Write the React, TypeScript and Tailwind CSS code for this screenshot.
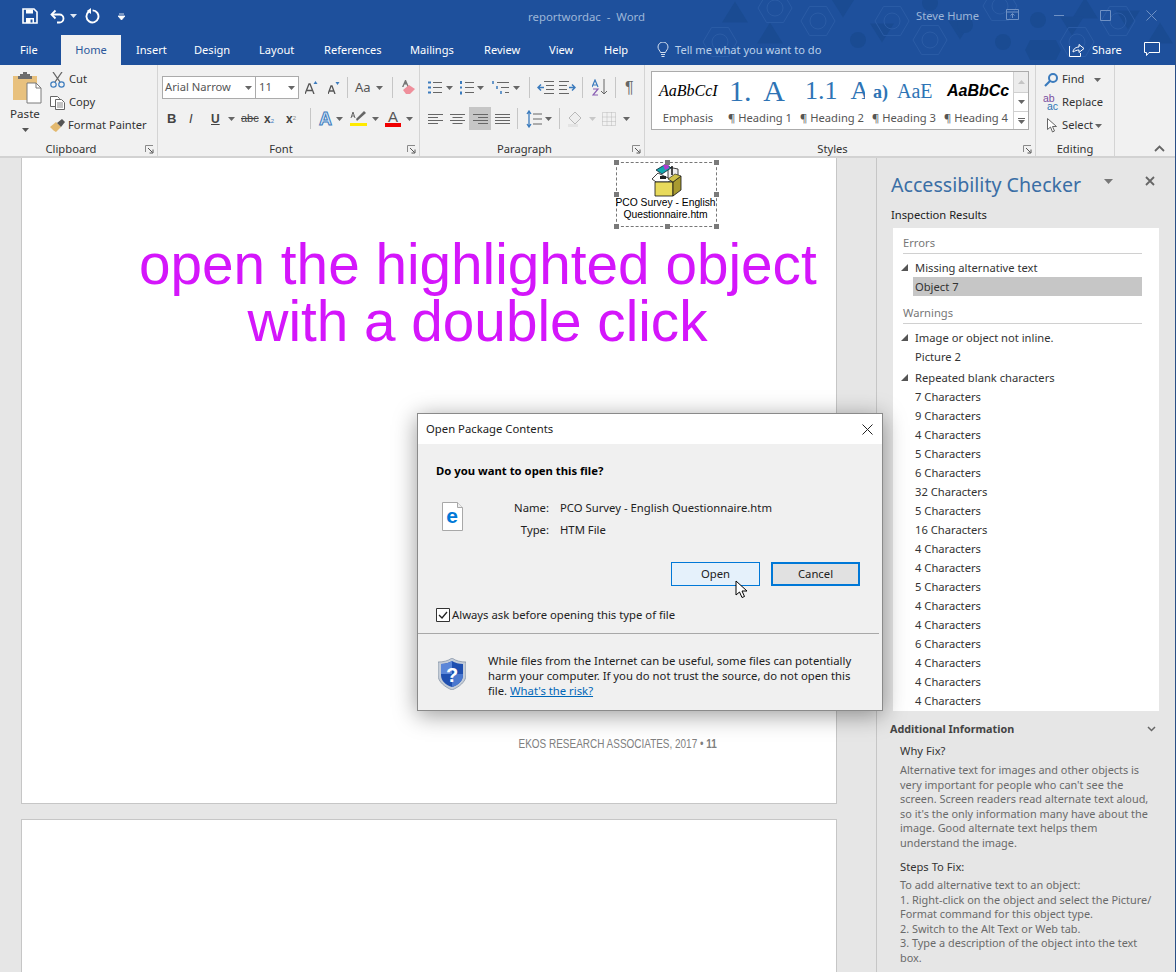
import React from "react";

const Caret = ({ c = "#555", className = "" }: { c?: string; className?: string }) => (
  <svg width="7" height="4" viewBox="0 0 7 4" className={"shrink-0 " + className}>
    <path d="M0 0h7L3.5 4z" fill={c} />
  </svg>
);

const Launcher = () => (
  <svg width="9" height="9" viewBox="0 0 9 9" className="shrink-0">
    <path d="M.5 7V.5H8" fill="none" stroke="#8a8a8a" />
    <path d="M3 3l4.500 4.500M8 4.500V8H4.500" fill="none" stroke="#555" />
  </svg>
);

const Sep = ({ className = "" }: { className?: string }) => <div className={"w-px bg-[#c6c6c6] shrink-0 " + className} />;

const Group = ({
  label,
  className,
  launcher,
  children,
}: {
  label: string;
  className: string;
  launcher?: boolean;
  children: React.ReactNode;
}) => (
  <div className={"flex flex-col h-full border-r border-[#d4d4d4] shrink-0 " + className}>
    <div className="flex-1 min-h-0">{children}</div>
    <div className={"h-[14px] relative text-center text-[11.2px] leading-[14px] text-[#333] " + (launcher ? "pr-[15px]" : "")}>
      {label}
      {launcher && (
        <span className="absolute right-[3px] top-[3px] flex">
          <Launcher />
        </span>
      )}
    </div>
  </div>
);

const dark = "#1a4b92";
const ring = "#2b5ca6";
const triUp = (x: number, y: number, s = 13) => `M${x - s} ${y + s * 0.8}L${x} ${y - s * 0.8}L${x + s} ${y + s * 0.8}z`;
const triDown = (x: number, y: number, s = 13) => `M${x - s} ${y - s * 0.8}L${x + s} ${y - s * 0.8}L${x} ${y + s * 0.8}z`;
const hex = (x: number, y: number, s = 15) =>
  `M${x - s} ${y}L${x - s / 2} ${y - s * 0.85}H${x + s / 2}L${x + s} ${y}L${x + s / 2} ${y + s * 0.85}H${x - s / 2}z`;

const Hexes = () => (
  <svg width="476" height="65" viewBox="700 0 476 65" className="absolute right-0 top-0">
    {[735, 770].map((x, i) => (
      <path key={x} d={triUp(x, i === 0 ? 12 : 33)} fill={dark} />
    ))}
    <path d={triUp(1160, 33)} fill={dark} />
    <path d={triUp(1085, 8)} fill={dark} />
    {[
      [843, 8],
      [882, 33],
      [1072, 26],
      [1128, 20],
      [960, 30],
    ].map(([x, y]) => (
      <path key={x} d={triDown(x, y, 12)} fill={dark} />
    ))}
    {[
      [858, 40],
      [1038, 20],
      [1003, 42],
      [930, 3],
      [965, 25],
    ].map(([x, y]) => (
      <circle key={x} cx={x} cy={y} r="8" fill={dark} />
    ))}
    <path d="M1030 40h26l5 10-5 10h-26l-5-10z" fill={dark} />
    {[
      [818, 21],
      [892, 21],
      [930, 40],
      [1000, 6],
      [1077, 42],
      [1118, 21],
      [775, 8],
      [720, 42],
    ].map(([x, y]) => (
      <g key={x} fill="none" stroke={ring}>
        <path d={hex(x, y, 17)} />
        <circle cx={x} cy={y} r="8" />
      </g>
    ))}
  </svg>
);

const TitleBar = () => (
  <div className="h-[32px] flex items-center relative text-white">
    <svg width="16" height="16" viewBox="0 0 16 16" className="ml-[22px]">
      <path d="M1 1h11l3 3v11H1z" fill="none" stroke="#fff" strokeWidth="1.600" />
      <path d="M4 1.500h7v4H4zM4 10h8v5H4z" fill="#fff" />
      <path d="M8.500 11.500h2v3h-2z" fill="#1e509c" />
    </svg>
    <svg width="16" height="15" viewBox="0 0 16 15" className="ml-[12px]">
      <path d="M5.500 1.500L1.500 5.500l4 4" fill="none" stroke="#fff" strokeWidth="1.800" />
      <path d="M2 5.500h7.500a4 4 0 0 1 0 8H7" fill="none" stroke="#fff" strokeWidth="1.800" />
    </svg>
    <Caret c="#dfe7f3" className="ml-[4px]" />
    <svg width="16" height="16" viewBox="0 0 16 16" className="ml-[7px]">
      <path d="M8.600 2.400a6 6 0 1 1-4 1.400" fill="none" stroke="#fff" strokeWidth="1.900" />
      <path d="M7 0v6L2.800 3z" fill="#fff" />
    </svg>
    <svg width="7" height="7" viewBox="0 0 7 7" className="ml-[18px]">
      <path d="M1 1h5M0 3h7L3.500 7z" stroke="#fff" fill="#fff" strokeWidth=".8" />
    </svg>
    <div className="absolute left-[528px] top-[8px] whitespace-nowrap text-[11.4px] leading-[17px] text-[#9db6d8]">
      reportwordac&nbsp; -&nbsp; Word
    </div>
    <div className="absolute left-[916px] top-[7px] text-[11.2px] leading-[17px] text-[#9db6d8]">Steve Hume</div>
    <div className="absolute left-[1006px] top-[9px] flex items-center">
      <svg width="13" height="12" viewBox="0 0 13 12">
        <path d="M.5 .5h12v10H.5zM.5 3h12M6.500 9V5M4.500 6.500l2-2 2 2" fill="none" stroke="#6f91c4" />
      </svg>
      <svg width="10" height="1" className="ml-[35px]">
        <path d="M0 .5h10" stroke="#6f91c4" />
      </svg>
      <svg width="11" height="11" viewBox="0 0 11 11" className="ml-[36px]">
        <path d="M.5 .5h10v10H.5z" fill="none" stroke="#6f91c4" />
      </svg>
      <svg width="11" height="11" viewBox="0 0 11 11" className="ml-[35px]">
        <path d="M.5 .5l10 10M10.500 .5l-10 10" fill="none" stroke="#6f91c4" />
      </svg>
    </div>
  </div>
);

const tabs: [string, string][] = [
  ["Insert", "w-[58px]"],
  ["Design", "w-[65px]"],
  ["Layout", "w-[65px]"],
  ["References", "w-[86px]"],
  ["Mailings", "w-[74px]"],
  ["Review", "w-[65px]"],
  ["View", "w-[55px]"],
  ["Help", "w-[53px]"],
];

const TabBar = () => (
  <div className="h-[33px] flex relative text-[11.1px] text-white leading-[35px]">
    <div className="w-[61px] pl-[20px]">File</div>
    <div className="w-[60px] h-[30px] mt-[3px] bg-[#f1f1f1] text-[#2b579a] text-center leading-[29px]">Home</div>
    {tabs.map(([t, w]) => (
      <div key={t} className={"pl-[15px] whitespace-nowrap " + w}>
        {t}
      </div>
    ))}
    <div className="flex items-center ml-[15px] mt-[1px]">
      <svg width="12" height="15" viewBox="0 0 12 15">
        <path
          d="M3.500 10.500C3 8.500 1 7.500 1 5a5 5 0 0 1 10 0c0 2.500-2 3.500-2.500 5.500zM4 12.500h4M4.500 14.500h3"
          fill="none"
          stroke="#d5e0f0"
        />
      </svg>
      <span className="ml-[6px] text-[#bcd0ea] whitespace-nowrap leading-[17px]">Tell me what you want to do</span>
    </div>
    <div className="absolute left-[1069px] top-[1px] flex items-center h-[33px]">
      <svg width="16" height="14" viewBox="0 0 16 14">
        <path d="M.5 3v10.500h11V10" fill="none" stroke="#fff" />
        <path d="M4 9c0-3 3-5 6-5V1.500l5 4-5 4V7c-2.500 0-4 1-6 2z" fill="none" stroke="#fff" />
      </svg>
      <span className="ml-[7px] leading-[17px]">Share</span>
      <svg width="16" height="15" viewBox="0 0 16 15" className="ml-[22px]">
        <path d="M.5 .5h15v10H5l-2.500 3v-3h-2z" fill="none" stroke="#fff" />
      </svg>
    </div>
  </div>
);

const PasteIcon = () => (
  <svg width="30" height="32" viewBox="0 0 30 32" className="ml-[12px] block">
    <path d="M1 4h24v24H1z" fill="#e8c17e" />
    <path d="M8 4V2h3V0h4v2h3v2h2v3H6V4z" fill="#6d6d6d" />
    <path d="M15 11h9l5 5v15H15z" fill="#fff" stroke="#7a7a7a" />
    <path d="M24 11v5h5" fill="none" stroke="#7a7a7a" />
  </svg>
);

const Clipboard = () => (
  <div className="flex pt-[7px]">
    <div className="w-[50px] text-center text-[11.6px] text-[#333] leading-[16px]">
      <PasteIcon />
      <div className="mt-[2px]">Paste</div>
      <div className="flex justify-center mt-[6px]">
        <Caret />
      </div>
    </div>
    <div className="text-[11.2px] text-[#333] flex flex-col -mt-[4px]">
      <div className="flex items-center h-[23px]">
        <svg width="15" height="16" viewBox="0 0 15 16" className="mr-[4px]">
          <path d="M3 0l7 10M12 0L5 10" stroke="#666" strokeWidth="1.300" />
          <circle cx="3.500" cy="12.500" r="2.700" fill="none" stroke="#3b7bbd" strokeWidth="1.200" />
          <circle cx="11.500" cy="12.500" r="2.700" fill="none" stroke="#3b7bbd" strokeWidth="1.200" />
        </svg>
        Cut
      </div>
      <div className="flex items-center h-[23px]">
        <svg width="15" height="14" viewBox="0 0 15 14" className="mr-[4px]">
          <path d="M.5 .5h7l2 2v8h-9z" fill="#fff" stroke="#666" />
          <path d="M5.500 3.500h6l3 3v7h-9z" fill="#fff" stroke="#666" />
          <path d="M7 7h6M7 9h6M7 11h6" stroke="#888" />
        </svg>
        Copy
      </div>
      <div className="flex items-center h-[23px] whitespace-nowrap">
        <svg width="15" height="14" viewBox="0 0 15 14" className="mr-[3px]">
          <path d="M0 8l6-5 5 5-5 5c-1 0-5-4-6-5z" fill="#e3b96f" />
          <path d="M7 4l5-4 3 3-4 5z" fill="#555" />
        </svg>
        Format Painter
      </div>
    </div>
  </div>
);

const MiniCaret = () => <Caret c="#666" />;

const Font = () => (
  <div className="pl-[4px] pt-[11px] text-[#444]">
    <div className="flex items-center h-[23px]">
      <div className="w-[94px] h-[23px] bg-white border border-[#ababab] flex items-center justify-between pl-[2px] pr-[3px] text-[11.2px] text-[#555]">
        Arial Narrow <MiniCaret />
      </div>
      <div className="w-[43px] h-[23px] bg-white border border-l-0 border-[#ababab] flex items-center justify-between pl-[3px] pr-[3px] text-[11.2px] text-[#555]">
        11 <MiniCaret />
      </div>
      <svg width="13" height="13" viewBox="0 0 13 13" className="ml-[6px]">
        <path d="M0 13L4 3h1l4 10M2 9.500h5" fill="none" stroke="#555" strokeWidth="1.300" />
        <path d="M8.500 3l2-3 2 3z" fill="#3b7bbd" />
      </svg>
      <svg width="12" height="12" viewBox="0 0 12 12" className="ml-[10px]">
        <path d="M0 12l3-8h1l3 8M1.500 9h4" fill="none" stroke="#555" strokeWidth="1.300" />
        <path d="M7.500 0h4l-2 3z" fill="#3b7bbd" />
      </svg>
      <Sep className="h-[21px] ml-[7px]" />
      <span className="ml-[7px] text-[13px] text-[#555]">Aa</span>
      <Caret c="#666" className="ml-[5px]" />
      <Sep className="h-[21px] ml-[9px]" />
      <svg width="15" height="15" viewBox="0 0 15 15" className="ml-[8px]">
        <path d="M4 0L1 7h1.500l1-2.500h2L6.500 7H8L5 0z" fill="#777" />
        <path d="M2 10l6-5 6 4-5 5H5z" fill="#ef8f9b" />
      </svg>
    </div>
    <div className="flex items-center h-[23px] mt-[8px] pl-[5px] text-[13px]">
      <span className="w-[22px] font-bold text-[13px] text-[#444] font-['Liberation_Sans',sans-serif]">B</span>
      <span className="w-[22px] italic text-[13px] text-[#444] font-['Liberation_Sans',sans-serif]">I</span>
      <span className="w-[17px] underline font-bold text-[12px] font-['Liberation_Sans',sans-serif]">U</span>
      <MiniCaret />
      <span className="ml-[6px] w-[23px] line-through text-[11px] font-['Liberation_Sans',sans-serif]">abc</span>
      <span className="w-[22px] font-bold text-[12px] font-['Liberation_Sans',sans-serif]">
        x<span className="text-[#3b7bbd] text-[6px] font-normal">2</span>
      </span>
      <span className="w-[24px] font-bold text-[12px] font-['Liberation_Sans',sans-serif]">
        x<sup className="text-[#888] text-[6px] font-normal">2</sup>
      </span>
      <Sep className="h-[21px] mr-[8px]" />
      <span className="w-[17px] text-[18px] leading-[20px] text-[#d5e6f7] font-bold [-webkit-text-stroke:1px_#3b7bbd] font-['Liberation_Sans',sans-serif]">
        A
      </span>
      <MiniCaret />
      <svg width="17" height="17" viewBox="0 0 17 17" className="ml-[7px]">
        <path d="M0 13h17v3H0z" fill="#ffea00" />
        <path d="M7 11l9-8-2-2-8 8z" fill="#666" />
        <path d="M1 8l2-6 2 6M2 6h2" fill="none" stroke="#666" />
      </svg>
      <Caret c="#666" className="ml-[5px]" />
      <div className="ml-[6px] w-[16px] flex flex-col items-center">
        <span className="text-[15px] leading-[13px] text-[#555] font-['Liberation_Sans',sans-serif]">A</span>
        <div className="w-[16px] h-[4px] bg-[#f00000]" />
      </div>
      <Caret c="#666" className="ml-[5px]" />
    </div>
  </div>
);

const Lines = ({ kind }: { kind: "l" | "c" | "r" | "j" }) => {
  const d = {
    l: "M0 1.500h15M0 4.500h10M0 7.500h15M0 10.500h10",
    c: "M0 1.500h15M2.500 4.500h10M0 7.500h15M2.500 10.500h10",
    r: "M0 1.500h15M5 4.500h10M0 7.500h15M5 10.500h10",
    j: "M0 1.500h15M0 4.500h15M0 7.500h15M0 10.500h15",
  }[kind];
  return (
    <svg width="15" height="12" viewBox="0 0 15 12">
      <path d={d} stroke="#666" />
    </svg>
  );
};

const ListIcon = ({ marks }: { marks: string }) => (
  <svg width="14" height="15" viewBox="0 0 14 15">
    <path d="M5 2.500h9M5 7.500h9M5 12.500h9" stroke="#666" />
    <path d={marks} stroke="#3b7bbd" strokeWidth="2" />
  </svg>
);

const Paragraph = () => (
  <div className="pl-[8px] pt-[11px]">
    <div className="flex items-center h-[23px]">
      <ListIcon marks="M0 2.500h3M0 7.500h3M0 12.500h3" />
      <Caret c="#666" className="ml-[4px]" />
      <span className="ml-[7px] flex">
        <ListIcon marks="M1 1v3M1 6.500v2M1 11.500v3" />
      </span>
      <Caret c="#666" className="ml-[3px]" />
      <svg width="19" height="15" viewBox="0 0 19 15" className="ml-[8px]">
        <path d="M5 2.500h12M9 7.500h8M13 12.500h4" stroke="#666" />
        <path d="M1 1v3M5 6v3M9 11v3" stroke="#3b7bbd" strokeWidth="1.500" />
      </svg>
      <Caret c="#666" className="ml-[2px]" />
      <Sep className="h-[21px] ml-[9px]" />
      <svg width="17" height="13" viewBox="0 0 17 13" className="ml-[7px]">
        <path d="M7 .5h10M9 4.500h8M9 8.500h8M7 12.500h10" stroke="#666" />
        <path d="M7 6.500H1M4 3.500L1 6.500l3 3" fill="none" stroke="#3b7bbd" strokeWidth="1.500" />
      </svg>
      <svg width="17" height="13" viewBox="0 0 17 13" className="ml-[5px]">
        <path d="M0 .5h10M0 4.500h8M0 8.500h8M0 12.500h10" stroke="#666" />
        <path d="M10 6.500h6M13 3.500l3 3-3 3" fill="none" stroke="#3b7bbd" strokeWidth="1.500" />
      </svg>
      <Sep className="h-[21px] ml-[6px]" />
      <svg width="16" height="17" viewBox="0 0 16 17" className="ml-[9px]">
        <path d="M0 8l3-7 3 7M1 6h4" fill="none" stroke="#3b7bbd" strokeWidth="1.200" />
        <path d="M1 10h5l-5 6h5" fill="none" stroke="#8a5fb3" strokeWidth="1.200" />
        <path d="M12 0v15M9 12l3 3 3-3" fill="none" stroke="#666" />
      </svg>
      <Sep className="h-[21px] ml-[7px]" />
      <span className="ml-[9px] text-[16px] leading-[20px] text-[#666] font-['Liberation_Sans',sans-serif]">¶</span>
    </div>
    <div className="flex items-center h-[23px] mt-[8px]">
      <span className="w-[22px] flex">
        <Lines kind="l" />
      </span>
      <span className="w-[22px] h-[23px] flex items-center">
        <Lines kind="c" />
      </span>
      <span className="w-[22px] h-[23px] flex items-center justify-center bg-[#c6c6c6] -ml-[3px]">
        <Lines kind="r" />
      </span>
      <span className="w-[22px] h-[23px] flex items-center justify-center">
        <Lines kind="j" />
      </span>
      <Sep className="h-[21px] ml-[4px]" />
      <svg width="16" height="18" viewBox="0 0 16 18" className="ml-[8px]">
        <path d="M7 4h9M7 9h9M7 14h9" stroke="#666" />
        <path d="M3 1v16M1 4l2-3 2 3M1 14l2 3 2-3" fill="none" stroke="#3b7bbd" strokeWidth="1.300" />
      </svg>
      <Caret c="#666" className="ml-[3px]" />
      <Sep className="h-[21px] ml-[7px]" />
      <svg width="16" height="16" viewBox="0 0 16 16" className="ml-[8px]">
        <path d="M1 7l6-6 6 6-6 6z" fill="#eee" stroke="#b8b8b8" />
        <path d="M0 13h10v3H0z" fill="#e4e4e4" />
      </svg>
      <Caret c="#c8c8c8" className="ml-[5px]" />
      <svg width="14" height="14" viewBox="0 0 14 14" className="ml-[6px]">
        <path d="M.5 .5h13v13H.5zM.5 5h13M.5 9.500h13M5 .5v13M9.500 .5v13" fill="none" stroke="#bbb" strokeDasharray="1 1" />
      </svg>
      <Caret c="#666" className="ml-[7px]" />
    </div>
  </div>
);

const StyleItem = ({ label, children }: { label: string; children: React.ReactNode }) => (
  <div className="w-[72px] shrink-0 flex flex-col items-center">
    <div className="w-[66px] h-[38px] overflow-hidden whitespace-nowrap flex items-center">{children}</div>
    <div className="h-[20px] text-[11.2px] leading-[18px] text-[#555] whitespace-nowrap">{label}</div>
  </div>
);

const serif = "font-['Liberation_Serif',serif]";

const Styles = () => (
  <div className="pt-[6px] pl-[6px]">
    <div className="w-[378px] h-[59px] bg-white border border-[#ababab] flex">
      <div className="flex-1 flex overflow-hidden">
        <StyleItem label="Emphasis">
          <span className={"ml-[4px] italic text-[16px] text-black " + serif}>AaBbCcI</span>
        </StyleItem>
        <StyleItem label="¶ Heading 1">
          <span className={"ml-[2px] text-[30px] text-[#2e74b5] [word-spacing:6px] " + serif}>1. A</span>
        </StyleItem>
        <StyleItem label="¶ Heading 2">
          <span className={"ml-[6px] text-[26px] text-[#2e74b5] [word-spacing:8px] " + serif}>1.1 A</span>
        </StyleItem>
        <StyleItem label="¶ Heading 3">
          <span className={"ml-[2px] text-[20px] text-[#2e74b5] " + serif}>
            <b className="text-[18px] mr-[9px]">a)</b>AaE
          </span>
        </StyleItem>
        <StyleItem label="¶ Heading 4">
          <span className="ml-[4px] italic font-bold text-[16px] text-black font-['Liberation_Sans',sans-serif]">
            AaBbCc
          </span>
        </StyleItem>
      </div>
      <div className="w-[15px] flex flex-col border-l border-[#d0d0d0] shrink-0">
        <div className="h-[21px] bg-[#ececec] border-b border-[#d0d0d0] flex items-center justify-center">
          <Caret c="#c4c4c4" className="rotate-180" />
        </div>
        <div className="h-[19px] border-b border-[#d0d0d0] flex items-center justify-center">
          <Caret c="#666" />
        </div>
        <div className="flex-1 flex flex-col gap-[1px] items-center justify-center">
          <div className="w-[7px] h-px bg-[#666]" />
          <Caret c="#666" />
        </div>
      </div>
    </div>
  </div>
);

const Editing = () => (
  <div className="pt-[3px] text-[11.2px] text-[#333] flex flex-col">
    <div className="flex items-center h-[23px]">
      <svg width="14" height="14" viewBox="0 0 14 14" className="ml-[8px]">
        <circle cx="9" cy="5" r="4" fill="none" stroke="#3b7bbd" strokeWidth="2" />
        <path d="M6 8l-5 5" stroke="#3b7bbd" strokeWidth="2.200" />
      </svg>
      <span className="ml-[4px]">Find</span>
      <Caret c="#666" className="ml-[9px]" />
    </div>
    <div className="flex items-center h-[23px]">
      <svg width="17" height="17" viewBox="0 0 17 17" className="ml-[7px]">
        <text x="0" y="8" fontSize="10.500" fill="#7a4fa0" fontFamily="Liberation Sans">
          ab
        </text>
        <text x="4" y="15.500" fontSize="10.500" fill="#2e74b5" fontFamily="Liberation Sans">
          ac
        </text>
      </svg>
      <span className="ml-[2px]">Replace</span>
    </div>
    <div className="flex items-center h-[23px]">
      <svg width="10" height="15" viewBox="0 0 10 15" className="ml-[11px]">
        <path d="M.5 .5v11l3-2.500 2 5 2-1-2-4.500h4z" fill="#fff" stroke="#666" />
      </svg>
      <span className="ml-[5px]">Select</span>
      <Caret c="#666" className="ml-[2px]" />
    </div>
  </div>
);

const Ribbon = () => (
  <div className="h-[93px] bg-[#f1f1f1] border-b-2 border-[#d2d2d2] flex relative">
    <Group label="Clipboard" className="w-[158px]" launcher>
      <Clipboard />
    </Group>
    <Group label="Font" className="w-[262px]" launcher>
      <Font />
    </Group>
    <Group label="Paragraph" className="w-[225px]" launcher>
      <Paragraph />
    </Group>
    <Group label="Styles" className="w-[391px]" launcher>
      <Styles />
    </Group>
    <Group label="Editing" className="w-[79px]">
      <Editing />
    </Group>
    <svg width="11" height="7" viewBox="0 0 11 7" className="absolute left-[1154px] top-[80px]">
      <path d="M1 6l4.500-4.500L10 6" fill="none" stroke="#666" strokeWidth="1.800" />
    </svg>
  </div>
);

const PackageIcon = () => (
  <svg width="32" height="34" viewBox="0 0 32 34" className="mx-auto block">
    <path d="M17 4l10 2v9l-6 4-4-3z" fill="#efefef" stroke="#111" strokeWidth=".8" />
    <path d="M5 7L15 1l5 4-9 6z" fill="#12a6ad" stroke="#123" strokeWidth=".8" />
    <path d="M12 2l5-1 1 4-4 2z" fill="#b03ad0" />
    <path d="M1 16l6-6 14 7-4 2H5z" fill="#fff" stroke="#111" strokeWidth=".8" />
    <path d="M9 13h6v3H9z" fill="#222" />
    <path d="M4 19h18v14H4z" fill="#e8da5c" stroke="#111" strokeWidth=".8" />
    <path d="M22 19l8-6v14l-8 6z" fill="#a89a30" stroke="#111" strokeWidth=".8" />
    <path d="M22 19l-5-3 7-5 6 2z" fill="#cfc24a" stroke="#111" strokeWidth=".6" />
    <path d="M21 3v9" stroke="#111" strokeWidth="1.500" />
  </svg>
);

const Handle = ({ className }: { className: string }) => <div className={"absolute w-[5px] h-[5px] bg-[#7a7a7a] " + className} />;

const Document = () => (
  <div className="w-[876px] shrink-0 pl-[21px] bg-[#e6e6e6]">
    <div className="w-[816px] h-[646px] bg-white border border-[#c6c6c6] border-t-0 flex flex-col">
      <div className="self-end mr-[119px] mt-[4px] w-[101px] h-[65px] relative border border-dashed border-[#777] text-center">
        <Handle className="-left-[3px] -top-[3px]" />
        <Handle className="left-[48px] -top-[3px]" />
        <Handle className="-right-[3px] -top-[3px]" />
        <Handle className="-left-[3px] top-[29px]" />
        <Handle className="-right-[3px] top-[29px]" />
        <Handle className="-left-[3px] -bottom-[3px]" />
        <Handle className="left-[48px] -bottom-[3px]" />
        <Handle className="-right-[3px] -bottom-[3px]" />
        <PackageIcon />
        <div className="-ml-[2px] text-[10.300px] leading-[12px] text-black whitespace-nowrap font-['Liberation_Sans',sans-serif]">
          PCO Survey - English
          <br />
          Questionnaire.htm
        </div>
      </div>
      <div className="ml-[117px] w-[677px] mt-[9px] text-center text-[#d416fb] text-[56.7px] leading-[57px] whitespace-nowrap font-['Liberation_Sans',sans-serif]">
        open the highlighted object
        <br />
        with a double click
      </div>
      <div className="mt-auto mb-[50px] self-end mr-[119px] text-[12px] text-[#808080] whitespace-nowrap font-['Liberation_Sans',sans-serif] origin-right scale-x-[0.83]">
        EKOS RESEARCH ASSOCIATES, 2017 • <b>11</b>
      </div>
    </div>
    <div className="w-[816px] h-[160px] mt-[15px] bg-white border border-[#c6c6c6] border-b-0" />
  </div>
);

const chars = [7, 9, 4, 5, 6, 32, 5, 16, 4, 4, 5, 4, 4, 6, 4, 4, 4];

const Tri = () => (
  <svg width="7" height="7" viewBox="0 0 7 7" className="absolute left-[8px] top-[6px]">
    <path d="M7 0v7H0z" fill="#555" />
  </svg>
);

const Row = ({ tri, children }: { tri?: boolean; children: React.ReactNode }) => (
  <div className="h-[19px] pl-[22px] leading-[19px] relative whitespace-nowrap">
    {tri && <Tri />}
    {children}
  </div>
);

const Heading = ({ children }: { children: React.ReactNode }) => (
  <div className="ml-[10px] mr-[17px] h-[21px] border-b border-[#d0d0d0] text-[#777] leading-[19px]">{children}</div>
);

const Panel = () => (
  <div className="w-[300px] shrink-0 bg-[#e6e6e6] border-l border-[#c6c6c6] pl-[14px] text-[11.2px] text-[#333]">
    <div className="h-[50px] relative pt-[12px] text-[19.6px] leading-[30px] text-[#3a6ea5] whitespace-nowrap">
      Accessibility Checker
      <svg width="9" height="5" viewBox="0 0 9 5" className="absolute left-[213px] top-[21px]">
        <path d="M0 0h9L4.500 5z" fill="#777" />
      </svg>
      <svg width="10" height="10" viewBox="0 0 10 10" className="absolute left-[254px] top-[18px]">
        <path d="M1 1l8 8M9 1l-8 8" stroke="#666" strokeWidth="1.800" />
      </svg>
    </div>
    <div className="h-[20px] leading-[14px] text-[#222]">Inspection Results</div>
    <div className="ml-[2px] w-[266px] h-[483px] bg-white overflow-hidden pt-[5px] text-[#333]">
      <Heading>Errors</Heading>
      <div className="h-[4px]" />
      <Row tri>Missing alternative text</Row>
      <Row>
        <div className="absolute left-[20px] right-[17px] top-0 bottom-0 bg-[#c6c6c6]" />
        <span className="relative">Object 7</span>
      </Row>
      <div className="h-[7px]" />
      <Heading>Warnings</Heading>
      <div className="h-[4px]" />
      <Row tri>Image or object not inline.</Row>
      <Row>Picture 2</Row>
      <div className="h-[2px]" />
      <Row tri>Repeated blank characters</Row>
      {chars.map((c, i) => (
        <Row key={i}>{c} Characters</Row>
      ))}
    </div>
    <div className="h-[26px] mt-[5px] -ml-[1px] flex items-center font-bold text-[10.8px] text-[#444] relative">
      Additional Information
      <svg width="9" height="6" viewBox="0 0 9 6" className="absolute left-[257px] top-[10px]">
        <path d="M1 1l3.500 3.500L8 1" fill="none" stroke="#666" strokeWidth="1.500" />
      </svg>
    </div>
    <div className="pl-[9px] pr-[8px] text-[10.9px] leading-[14.500px] text-[#6a6a6a]">
      <div className="text-[11.2px] leading-[18px] text-[#333]">Why Fix?</div>
      <div className="mt-[3px] whitespace-nowrap">
        Alternative text for images and other objects is
        <br />
        very important for people who can't see the
        <br />
        screen. Screen readers read alternate text aloud,
        <br />
        so it's the only information many have about the
        <br />
        image. Good alternate text helps them
        <br />
        understand the image.
      </div>
      <div className="text-[11.2px] leading-[18px] text-[#333] mt-[8px]">Steps To Fix:</div>
      <div className="mt-[2px] whitespace-nowrap">
        To add alternative text to an object:
        <br />
        1. Right-click on the object and select the Picture/
        <br />
        Format command for this object type.
        <br />
        2. Switch to the Alt Text or Web tab.
        <br />
        3. Type a description of the object into the text
        <br />
        box.
      </div>
    </div>
  </div>
);

const EdgeIcon = () => (
  <svg width="21" height="29" viewBox="0 0 21 29">
    <path d="M.5 .5h15l5 5v23H.5z" fill="#fff" stroke="#a8a8a8" />
    <path d="M15.500 .5v5h5" fill="#eee" stroke="#a8a8a8" />
    <text x="10" y="21" textAnchor="middle" fontSize="21" fontWeight="700" fill="#0078d7" fontFamily="Liberation Sans">
      e
    </text>
  </svg>
);

const Shield = () => (
  <svg width="28" height="32" viewBox="0 0 28 32">
    <path d="M14 0c4 3 9 4 14 4v13c0 7-7 12-14 15C7 29 0 24 0 17V4c5 0 10-1 14-4z" fill="#c5cdd8" stroke="#6f7f95" strokeWidth=".6" />
    <path d="M14 3c3 2 7 3 11 3v11c0 6-5 10-11 12C8 27 3 23 3 17V6c4 0 8-1 11-3z" fill="#1f4fb0" />
    <path d="M14 3c-3 2-7 3-11 3v10h11z" fill="#5b86d8" />
    <path d="M14 16h11v1c0 6-5 10-11 12z" fill="#4a78cf" />
    <text x="14" y="24" textAnchor="middle" fontSize="20" fontWeight="700" fill="#fff" fontFamily="Liberation Sans">
      ?
    </text>
  </svg>
);

const Dialog = () => (
  <div className="absolute left-[417px] top-[413px] w-[466px] h-[298px] border border-[#8a8a8a] bg-[#f0f0f0] shadow-[0_4px_22px_rgba(0,0,0,0.4)] text-[11.3px] text-[#222] flex flex-col">
    <div className="h-[30px] bg-white flex items-center justify-between pl-[8px] pr-[9px] shrink-0">
      <span>Open Package Contents</span>
      <svg width="11" height="11" viewBox="0 0 11 11">
        <path d="M.5 .5l10 10M10.500 .5l-10 10" stroke="#222" />
      </svg>
    </div>
    <div className="pl-[18px] pr-[22px] flex-1 flex flex-col">
      <div className="mt-[18px] h-[18px] font-bold text-black leading-[18px]">Do you want to open this file?</div>
      <div className="flex mt-[22px]">
        <div className="ml-[6px] w-[21px]">
          <EdgeIcon />
        </div>
        <div className="ml-[45px] leading-[22px] -mt-[5px] w-[41px] text-right">
          Name:
          <br />
          Type:
        </div>
        <div className="ml-[11px] leading-[22px] -mt-[5px] whitespace-nowrap">
          PCO Survey - English Questionnaire.htm
          <br />
          HTM File
        </div>
      </div>
      <div className="flex justify-end mt-[21px] gap-[11px]">
        <div className="relative w-[89px] h-[24px] bg-[#e5f1fb] border border-[#0078d7] text-center leading-[22px]">
          Open
          <svg width="13" height="19" viewBox="0 0 13 19" className="absolute left-[63px] top-[17px]">
            <path d="M1 1v14l3.500-3 2.500 5.500 2.500-1-2.500-5.500H12z" fill="#fff" stroke="#000" />
          </svg>
        </div>
        <div className="w-[89px] h-[24px] bg-[#e1e1e1] border-2 border-[#0078d7] text-center leading-[20px]">Cancel</div>
      </div>
      <div className="flex items-center mt-[20px] h-[18px]">
        <svg width="14" height="14" viewBox="0 0 14 14">
          <path d="M.5 .5h13v13H.5z" fill="#fff" stroke="#333" />
          <path d="M3 7l3 3 5-6" fill="none" stroke="#222" strokeWidth="1.300" />
        </svg>
        <span className="ml-[2px]">Always ask before opening this type of file</span>
      </div>
    </div>
    <div className="h-px bg-[#a8a8a8] mr-[3px] shrink-0" />
    <div className="h-[76px] pl-[20px] flex shrink-0">
      <div className="mt-[24px]">
        <Shield />
      </div>
      <div className="ml-[22px] mt-[19px] leading-[15px] whitespace-nowrap">
        While files from the Internet can be useful, some files can potentially
        <br />
        harm your computer. If you do not trust the source, do not open this
        <br />
        file. <span className="text-[#0067b8] underline">What's the risk?</span>
      </div>
    </div>
  </div>
);

export default function App() {
  return (
    <div className="w-[1176px] h-[972px] overflow-hidden relative bg-[#e6e6e6] font-['Noto_Sans','Open_Sans',sans-serif]">
      <div className="bg-[#1e509c] relative">
        <Hexes />
        <div className="relative">
          <TitleBar />
          <TabBar />
        </div>
      </div>
      <Ribbon />
      <div className="flex">
        <Document />
        <Panel />
      </div>
      <Dialog />
      <div className="absolute right-0 top-0 bottom-0 w-[1.5px] bg-[#2a4f86]" />
    </div>
  );
}
